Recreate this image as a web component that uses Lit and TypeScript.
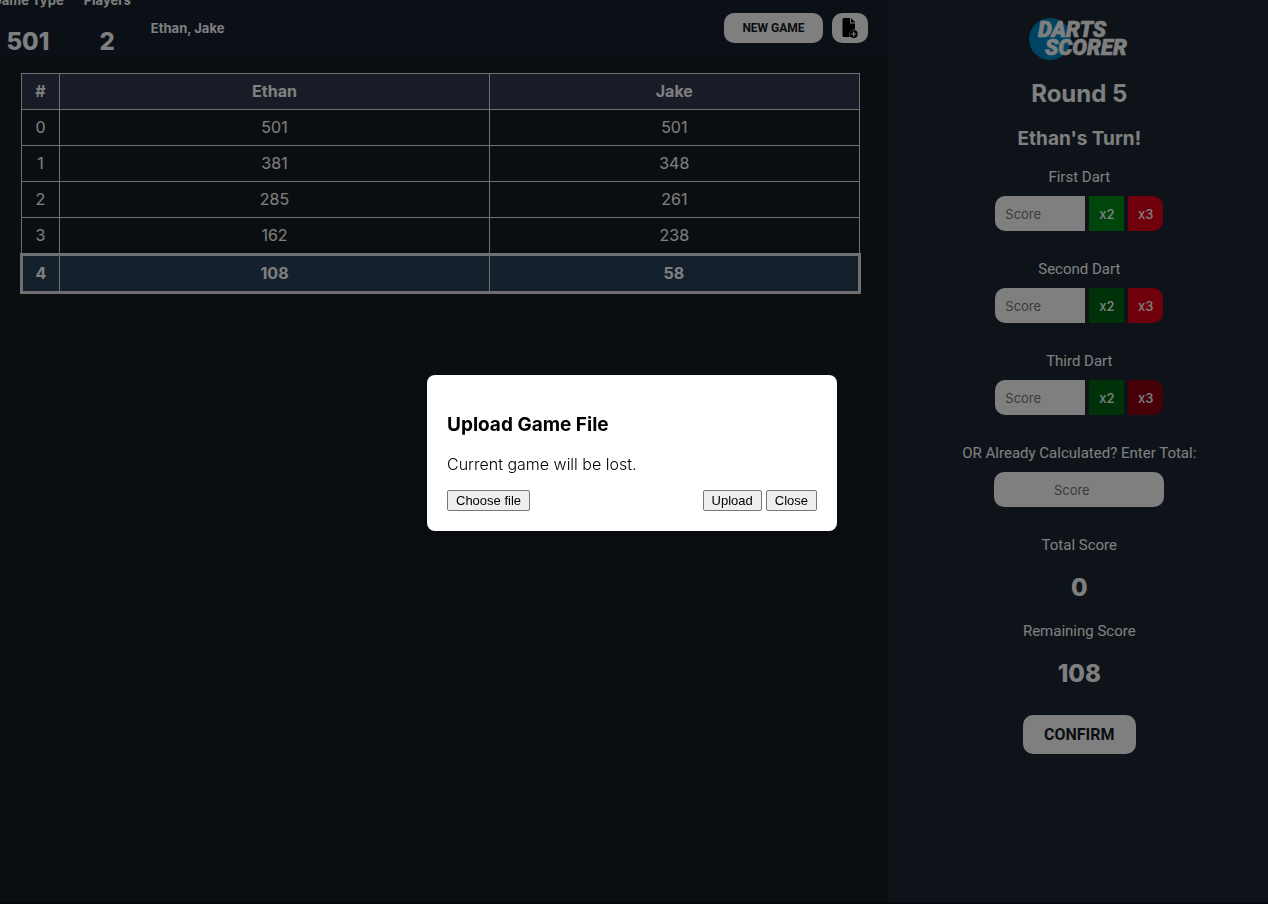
import { LitElement, html, css } from "lit";
import { customElement, property, state } from "lit/decorators.js";
import { classMap } from "lit/directives/class-map.js";

interface Dart {
  id: string;
  label: string;
  double: boolean;
  triple: boolean;
}

@customElement("game-header")
class GameHeader extends LitElement {
  @property({ type: Number }) gameType = 501;
  @property({ type: Array }) players: string[] = [];

  static styles = css`
    :host {
      display: block;
    }
    .bar {
      display: flex;
      align-items: center;
      justify-content: space-between;
      height: 56px;
      padding: 0 20px 2px 0;
      background: #14202d;
      color: #fff;
      overflow: hidden;
    }
    .stats {
      display: flex;
      align-items: center;
      gap: 20px;
      margin-left: -8px;
      font-size: 13px;
      font-weight: 700;
      line-height: 16px;
    }
    .stat {
      display: grid;
      justify-items: center;
      gap: 20px;
      padding-bottom: 8px;
    }
    .value {
      font-size: 24px;
      font-weight: 800;
      line-height: 28px;
    }
    .actions {
      display: flex;
      gap: 9px;
    }
    button {
      display: flex;
      align-items: center;
      justify-content: center;
      height: 30px;
      border: 0;
      border-radius: 10px;
      background: #fff;
      color: #141c26;
      font: 700 12px/16px Roboto, sans-serif;
      padding: 0 18px;
    }
    .icon {
      width: 36px;
      padding: 0;
    }
  `;

  render() {
    return html`
      <header class="bar">
        <div class="stats">
          <div class="stat"><span>Game Type</span><span class="value">${this.gameType}</span></div>
          <div class="stat"><span>Players</span><span class="value">${this.players.length}</span></div>
          <span>${this.players.join(", ")}</span>
        </div>
        <div class="actions">
          <button type="button">NEW GAME</button>
          <button type="button" class="icon" aria-label="Upload game file">
            <svg width="16" height="21" viewBox="0 0 16 21">
              <path d="M2 0h6v5.500h5v6a4.900 4.900 0 0 0-5 7.500H2a1.500 1.500 0 0 1-1.500-1.500v-16A1.500 1.500 0 0 1 2 0z" fill="#000" />
              <path d="M9 0l4.300 4.600H9z" fill="#000" />
              <circle cx="11.700" cy="16" r="4" fill="#000" />
              <path d="M11.700 13.500v5M9.200 16h5" stroke="#fff" stroke-width="1.200" />
            </svg>
          </button>
        </div>
      </header>
    `;
  }
}

@customElement("score-table")
class ScoreTable extends LitElement {
  @property({ type: Array }) players: string[] = [];
  @property({ type: Array }) rounds: number[][] = [];

  static styles = css`
    :host {
      display: block;
    }
    table {
      width: 100%;
      border-collapse: collapse;
      table-layout: fixed;
      color: #fff;
      font-size: 16px;
      line-height: 19px;
      text-align: center;
    }
    .index {
      width: 38px;
    }
    .first {
      width: 430px;
    }
    th,
    td {
      height: 35px;
      padding: 0;
      border: 1px solid #e0e0e4;
    }
    th {
      background: #2e394c;
      font-weight: 700;
    }
    .current {
      border: 3px solid #e0e0e4;
      background: #2a405a;
      font-weight: 700;
    }
  `;

  render() {
    const last = this.rounds.length - 1;
    return html`
      <table>
        <colgroup>
          <col class="index" />
          <col class="first" />
          <col />
        </colgroup>
        <thead>
          <tr>
            <th scope="col">#</th>
            ${this.players.map((p) => html`<th scope="col">${p}</th>`)}
          </tr>
        </thead>
        <tbody>
          ${this.rounds.map(
            (scores, i) => html`
              <tr class=${classMap({ current: i === last })}>
                <td>${i}</td>
                ${scores.map((s) => html`<td>${s}</td>`)}
              </tr>
            `
          )}
        </tbody>
      </table>
    `;
  }
}

@customElement("score-panel")
class ScorePanel extends LitElement {
  @property({ type: Array }) darts: Dart[] = [];
  @property({ type: Number }) remaining = 0;

  static styles = css`
    :host {
      display: block;
      background: #1b2632;
      color: #fff;
    }
    .panel {
      display: flex;
      flex-direction: column;
      align-items: center;
      padding: 17px 0 0 3px;
      font-family: Roboto, sans-serif;
      font-size: 15px;
      line-height: 18px;
    }
    .logo {
      font: italic 900 22px Roboto, sans-serif;
    }
    h1,
    h2 {
      margin: 0;
      font-family: Inter, sans-serif;
      font-weight: 700;
    }
    h1 {
      margin-top: 19px;
      font-size: 24px;
      line-height: 28px;
    }
    h2 {
      margin: 20px 0 18px;
      font-size: 19px;
      line-height: 22px;
    }
    .dart {
      display: grid;
      justify-items: center;
      gap: 10px;
      margin-bottom: 29px;
    }
    .row {
      display: flex;
      gap: 4px;
    }
    input {
      box-sizing: border-box;
      width: 90px;
      height: 35px;
      padding: 0 10px;
      border: 0;
      border-radius: 10px 0 0 10px;
      background: #fff;
      font: 13px/16px Inter, sans-serif;
    }
    .total {
      width: 170px;
      border-radius: 10px;
      text-align: center;
    }
    button {
      border: 0;
      color: #fff;
      font: 500 13px/16px Inter, sans-serif;
    }
    .double,
    .triple {
      width: 35px;
      height: 35px;
      padding: 0;
    }
    .double {
      background: #006414;
    }
    .double.on {
      background: #008c18;
    }
    .triple {
      border-radius: 0 10px 10px 0;
      background: #8a0010;
    }
    .triple.on {
      background: #e00018;
    }
    .value {
      margin: 20px 0;
      font-family: Inter, sans-serif;
      font-size: 24px;
      font-weight: 800;
      line-height: 28px;
    }
    .confirm {
      height: 39px;
      margin-top: 7px;
      padding: 0 21px;
      border-radius: 10px;
      background: #fff;
      color: #141c26;
      font: 700 16px/19px Roboto, sans-serif;
    }
  `;

  render() {
    return html`
      <aside class="panel">
        <svg class="logo" width="100" height="44" viewBox="0 0 100 44" role="img" aria-label="Darts Scorer">
          <circle cx="21" cy="22" r="21" fill="#0088c4" />
          <g fill="#fff" stroke="#fff" stroke-width="0.600">
            <text x="9" y="20">DARTS</text>
            <text x="16" y="38">SCORER</text>
          </g>
        </svg>
        <h1>Round 5</h1>
        <h2>Ethan's Turn!</h2>
        ${this.darts.map(
          (d) => html`
            <div class="dart">
              <label for=${d.id}>${d.label}</label>
              <div class="row">
                <input id=${d.id} type="number" placeholder="Score" />
                <button type="button" class=${classMap({ double: true, on: d.double })}>x2</button>
                <button type="button" class=${classMap({ triple: true, on: d.triple })}>x3</button>
              </div>
            </div>
          `
        )}
        <div class="dart">
          <label for="total">OR Already Calculated? Enter Total:</label>
          <input class="total" id="total" type="number" placeholder="Score" />
        </div>
        <span>Total Score</span>
        <span class="value">0</span>
        <span>Remaining Score</span>
        <span class="value">${this.remaining}</span>
        <button type="button" class="confirm">CONFIRM</button>
      </aside>
    `;
  }
}

@customElement("upload-dialog")
class UploadDialog extends LitElement {
  static styles = css`
    :host {
      position: fixed;
      inset: 0;
      display: flex;
      align-items: center;
      justify-content: center;
      padding: 2px 4px 0 0;
      background: rgba(0, 0, 0, 0.5);
    }
    dialog {
      position: static;
      box-sizing: border-box;
      width: 410px;
      margin: 0;
      padding: 39px 20px 20px;
      border: 0;
      border-radius: 8px;
      background: #fff;
      color: #000;
      box-shadow: 0 2px 8px rgba(0, 0, 0, 0.4);
    }
    h3 {
      margin: 0;
      font-size: 19px;
      font-weight: 700;
      line-height: 22px;
    }
    p {
      margin: 19px 0 16px;
      font-size: 16px;
      font-weight: 300;
      line-height: 19px;
    }
    .row {
      display: flex;
      gap: 4px;
    }
    .choose {
      margin-right: auto;
    }
    button {
      height: 21px;
      padding: 0 8px;
      border: 1px solid #767676;
      border-radius: 2px;
      background: #efefef;
      color: #000;
      font: 13px/15px "Liberation Sans", sans-serif;
    }
  `;

  private pick() {
    this.renderRoot.querySelector<HTMLInputElement>("input")?.click();
  }

  render() {
    return html`
      <dialog open aria-labelledby="title">
        <h3 id="title">Upload Game File</h3>
        <p>Current game will be lost.</p>
        <div class="row">
          <input type="file" hidden aria-label="Game file" />
          <button type="button" class="choose" @click=${this.pick}>Choose file</button>
          <button type="button">Upload</button>
          <button type="button" @click=${() => this.dispatchEvent(new Event("close"))}>Close</button>
        </div>
      </dialog>
    `;
  }
}

@customElement("app-root")
class AppRoot extends LitElement {
  @state() private uploading = true;

  private players = ["Ethan", "Jake"];
  private rounds = [
    [501, 501],
    [381, 348],
    [285, 261],
    [162, 238],
    [108, 58],
  ];
  private darts: Dart[] = [
    { id: "first", label: "First Dart", double: true, triple: true },
    { id: "second", label: "Second Dart", double: false, triple: true },
    { id: "third", label: "Third Dart", double: false, triple: false },
  ];

  static styles = css`
    :host {
      display: block;
      box-sizing: border-box;
      min-height: 100vh;
      background: #0c0e16;
      font-family: Inter, sans-serif;
    }
    .layout {
      display: grid;
      grid-template-columns: 7fr 3fr;
      min-height: calc(100vh - 2px);
    }
    .game {
      background: #161c23;
    }
    .board {
      padding: 15px 27px 0 20px;
    }
  `;

  render() {
    return html`
      <div class="layout">
        <main class="game">
          <game-header .players=${this.players}></game-header>
          <div class="board">
            <score-table .players=${this.players} .rounds=${this.rounds}></score-table>
          </div>
        </main>
        <score-panel .darts=${this.darts} .remaining=${108}></score-panel>
      </div>
      ${this.uploading
        ? html`<upload-dialog @close=${() => (this.uploading = false)}></upload-dialog>`
        : ""}
    `;
  }
}
